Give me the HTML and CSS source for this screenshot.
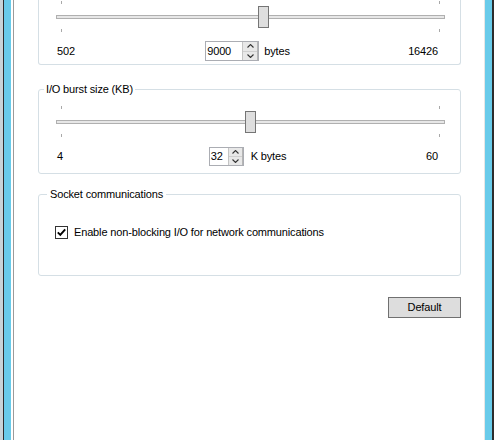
FILE: index.html
```html
<!DOCTYPE html>
<html lang="en">
<head>
<meta charset="utf-8">
<title>Settings</title>
<link rel="stylesheet" href="styles.css">
</head>
<body>
<div class="window">
  <div class="frame-left"></div>
  <main class="content">
    <fieldset class="group g1">
      <div class="slider">
        <span class="tick top min"></span><span class="tick top max"></span>
        <div class="track"></div>
        <span class="thumb" style="--v:0.5337"></span>
        <span class="tick bot min"></span><span class="tick bot max"></span>
      </div>
      <div class="scale">
        <span class="lo">502</span>
        <div class="mid">
          <div class="spin">
            <span class="val">9000</span>
            <div class="btns">
              <span class="sbtn"><svg width="7" height="4" viewBox="0 0 7 4"><path d="M0.5 3.5L3.5 0.5L6.5 3.5" fill="none" stroke="#333" stroke-width="1.1"/></svg></span>
              <span class="sbtn"><svg width="7" height="4" viewBox="0 0 7 4"><path d="M0.5 0.5L3.5 3.5L6.5 0.5" fill="none" stroke="#333" stroke-width="1.1"/></svg></span>
            </div>
          </div>
          <span class="unit">bytes</span>
        </div>
        <span class="hi">16426</span>
      </div>
    </fieldset>

    <fieldset class="group g2">
      <legend>I/O burst size (KB)</legend>
      <div class="slider">
        <span class="tick top min"></span><span class="tick top max"></span>
        <div class="track"></div>
        <span class="thumb" style="--v:0.5"></span>
        <span class="tick bot min"></span><span class="tick bot max"></span>
      </div>
      <div class="scale">
        <span class="lo">4</span>
        <div class="mid">
          <div class="spin small">
            <span class="val">32</span>
            <div class="btns">
              <span class="sbtn"><svg width="7" height="4" viewBox="0 0 7 4"><path d="M0.5 3.5L3.5 0.5L6.5 3.5" fill="none" stroke="#333" stroke-width="1.1"/></svg></span>
              <span class="sbtn"><svg width="7" height="4" viewBox="0 0 7 4"><path d="M0.5 0.5L3.5 3.5L6.5 0.5" fill="none" stroke="#333" stroke-width="1.1"/></svg></span>
            </div>
          </div>
          <span class="unit k">K bytes</span>
        </div>
        <span class="hi">60</span>
      </div>
    </fieldset>

    <fieldset class="group g3">
      <legend>Socket communications</legend>
      <label class="check">
        <span class="box"><svg width="11" height="11" viewBox="0 0 11 11"><path d="M1.8 5.4L4.3 7.9L9.2 2.4" fill="none" stroke="#000" stroke-width="1.9"/></svg></span>
        <span class="check-text">Enable non-blocking I/O for network communications</span>
      </label>
    </fieldset>

    <div class="actions">
      <button class="btn-default" type="button">Default</button>
    </div>
  </main>
  <div class="frame-right"></div>
</div>
</body>
</html>
```

FILE: styles.css
```css
html, body {
  margin: 0;
  padding: 0;
  background: #fff;
}

body {
  font: 11px/13px "Liberation Sans", Arial, sans-serif;
  letter-spacing: -0.15px;
  color: #000;
}

.window {
  display: flex;
  height: 440px;
  overflow: hidden;
}

.frame-left {
  flex: none;
  width: 14px;
  background: linear-gradient(to right,
    #c9d3d7 0 3px,
    #2d2d2d 3px 4px,
    #69cbea 4px 11px,
    #ffffff 11px 13px,
    #9b9b9b 13px 14px);
}

.frame-right {
  flex: none;
  width: 10px;
  background: linear-gradient(to right,
    #e6e6e6 0 1px,
    #69cbea 1px 8px,
    #2d2d2d 8px 10px);
}

.content {
  flex: 1;
  padding-left: 24px;
  background: #fff;
}

.group {
  width: 423px;
  box-sizing: border-box;
  margin: 0;
  padding: 0;
  min-width: 0;
  border: 1px solid #d5dfe5;
  border-radius: 3px;
}

.group legend {
  padding: 0 2px;
  margin-left: 5px;
  line-height: 15px;
}

.g1 {
  border-top: none;
  border-radius: 0 0 3px 3px;
  padding: 1px 0 3px;
}

.g2 {
  margin-top: 17px;
  padding: 9px 0 7px;
}

.g3 {
  margin-top: 13px;
  padding: 24px 0 36px;
}

.g3 legend {
  padding: 0 3px;
  margin-left: 8px;
}

/* slider */
.slider {
  position: relative;
  height: 31px;
  box-sizing: border-box;
  padding-top: 14px;
  margin: 0 15px 0 17px;
}

.track {
  height: 4px;
  box-sizing: border-box;
  border: 1px solid #b0b0b0;
  background: #e7e7e7;
}

.tick {
  position: absolute;
  width: 1px;
  height: 3px;
  background: #a9a9a9;
}
.tick.top { top: 0; }
.tick.bot { top: 28px; }
.tick.min { left: 5px; }
.tick.max { right: 5px; }

.thumb {
  position: absolute;
  top: 5px;
  left: calc(var(--v) * (100% - 11px));
  width: 11px;
  height: 22px;
  box-sizing: border-box;
  border: 1px solid #757575;
  background: #dedede;
}

/* scale row */
.scale {
  display: grid;
  grid-template-columns: 1fr auto 1fr;
  align-items: center;
  height: 20px;
  margin: 9px 22px 0 18px;
}

.g2 .scale {
  height: 19px;
  margin-top: 10px;
}

.scale .hi {
  text-align: right;
}

.mid {
  display: flex;
  align-items: center;
  gap: 5px;
}

.unit.k {
  margin-left: 2px;
}

.spin {
  display: flex;
  width: 54px;
  height: 20px;
  box-sizing: border-box;
  border: 1px solid #abadb3;
  background: #fff;
}

.spin.small {
  width: 35px;
  height: 19px;
}

.spin .val {
  flex: 1;
  padding-left: 1px;
  display: flex;
  align-items: center;
}

.btns {
  width: 16px;
  display: flex;
  flex-direction: column;
  border-left: 1px solid #c4c4c4;
  border-right: 1px solid #b5b5b5;
  background: #e8e8e8;
  box-sizing: border-box;
}

.spin.small .btns {
  width: 15px;
}

.sbtn {
  flex: 1;
  display: flex;
  align-items: center;
  justify-content: center;
}

.sbtn + .sbtn {
  border-top: 1px solid #cfcfcf;
}

/* checkbox */
.check {
  display: flex;
  align-items: center;
  height: 13px;
  margin-left: 16px;
}

.box {
  width: 13px;
  height: 13px;
  box-sizing: border-box;
  border: 1px solid #333;
  background: #fff;
  display: flex;
  align-items: center;
  justify-content: center;
}

.check-text {
  margin-left: 6px;
}

/* button */
.actions {
  width: 423px;
  display: flex;
  justify-content: flex-end;
  margin-top: 21px;
}

.btn-default {
  width: 73px;
  height: 21px;
  box-sizing: border-box;
  margin: 0;
  padding: 0;
  border: 1px solid #707070;
  border-radius: 0;
  background: #dddddd;
  color: #000;
  font: inherit;
  letter-spacing: inherit;
}
```
